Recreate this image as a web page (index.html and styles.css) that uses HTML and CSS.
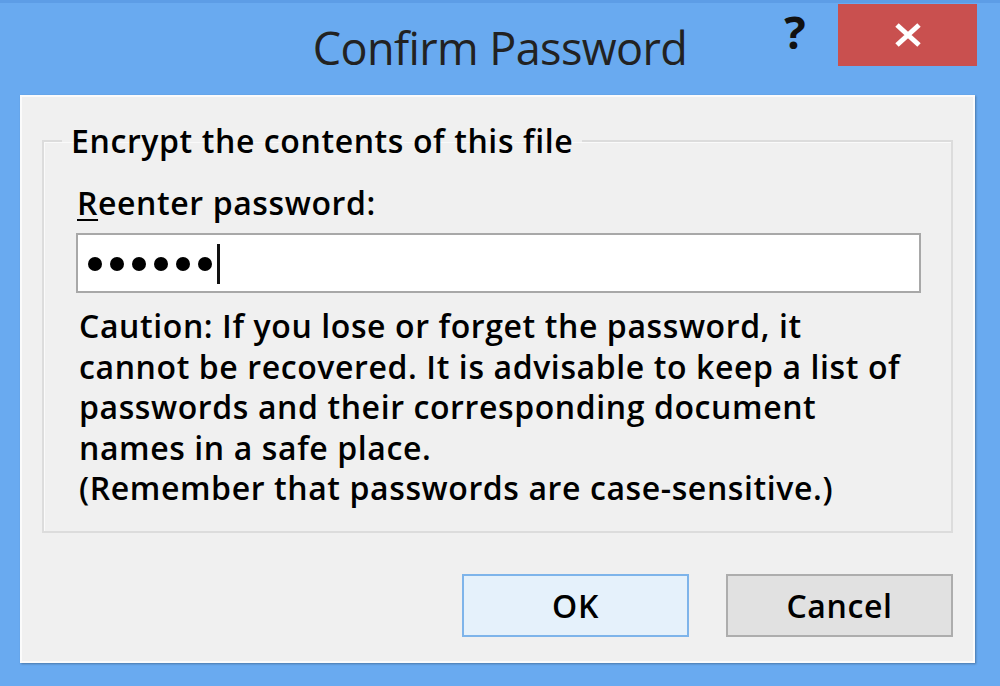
FILE: index.html
```
<!doctype html>
<html>
<head>
<meta charset="utf-8">
<title>Confirm Password</title>
<link rel="stylesheet" href="styles.css">
</head>
<body>
<div class="window">
	<div class="titlebar">
		<div class="title">Confirm Password</div>
		<div class="controls">
			<span class="help">?</span>
			<span class="close">
				<svg width="30" height="24" viewBox="0 0 30 24"><path d="M4 2 L26 22 M26 2 L4 22" stroke="#fff" stroke-width="5"/></svg>
			</span>
		</div>
	</div>
	<div class="client">
		<fieldset class="group">
			<legend>Encrypt the contents of this file</legend>
			<div class="group-body">
				<div class="label"><u>R</u>eenter password:</div>
				<div class="field">
					<span class="dot"></span><span class="dot"></span><span class="dot"></span><span class="dot"></span><span class="dot"></span><span class="dot"></span><span class="caret"></span>
				</div>
				<p class="caution">Caution: If you lose or forget the password, it<br>cannot be recovered. It is advisable to keep a list of<br>passwords and their corresponding document<br>names in a safe place.<br>(Remember that passwords are case-sensitive.)</p>
			</div>
		</fieldset>
		<div class="buttons">
			<button class="btn btn-ok">OK</button>
			<button class="btn">Cancel</button>
		</div>
	</div>
</div>
</body>
</html>
```
FILE: styles.css
```
*{margin:0; padding:0; box-sizing:border-box;}
html,body{height:100%;}
body{background:#69aaf0; overflow:hidden; font-family:"Open Sans","Noto Sans",sans-serif; color:#000;}
.window{height:686px; border-top:3px solid #5d9de6; display:flex; flex-direction:column;}
.titlebar{height:92px; display:grid; grid-template-columns:1fr auto 1fr;}
.title{grid-column:2; font-size:45px; color:#222; line-height:1; padding-top:22px; letter-spacing:-0.6px;}
.controls{grid-column:3; justify-self:end; display:flex; align-items:flex-start; margin-right:23px;}
.help{width:50px; text-align:center; font-weight:bold; font-size:45px; line-height:1; padding-top:6px; color:#111; margin-right:18px;}
.close{width:139px; height:62px; margin-top:1px; background:#c9504f; display:flex; align-items:center; justify-content:center;}
.client{margin:0 25px 0 20px; height:568px; background:#f0f0f0; border:2px solid #fbfbfb; box-shadow:1px 1px 2px rgba(0,0,0,.3); padding:24px 20px 24px 20px; display:flex; flex-direction:column; font-size:32px; font-weight:600; letter-spacing:0.6px;}
.group{border:2px solid #dcdcdc; height:412px; padding:0; box-shadow:inset 1px 1px 0 #fafafa;}
.group legend{line-height:40px; margin-left:18px; padding:0 9px;}
.group-body{padding:22px 30px 0 32px;}
.label{line-height:40px; margin-left:1px;}
.label u{text-decoration-thickness:2px; text-underline-offset:4px;}
.field{margin-top:10px; height:60px; background:#fff; border:2px solid #a8a8a8; display:flex; align-items:center; padding:2px 0 0 10px; gap:8px;}
.dot{width:14px; height:14px; border-radius:50%; background:#000;}
.caret{width:3px; height:40px; background:#111; margin-left:-3px;}
.caution{margin-top:13px; line-height:40.5px; margin-left:3px;}
.buttons{margin-top:auto; display:flex; justify-content:flex-end; gap:37px;}
.btn{width:227px; height:63px; font:inherit; letter-spacing:inherit; background:#e1e1e1; border:2px solid #adadad; color:#000;}
.btn-ok{background:#e5f1fb; border-color:#7eb4ea;}
```
